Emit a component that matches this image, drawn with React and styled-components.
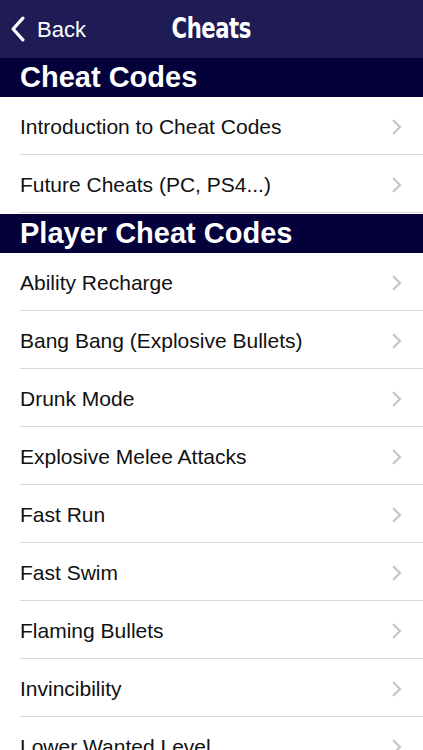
import React from 'react';
import styled, { createGlobalStyle } from 'styled-components';

const GlobalStyle = createGlobalStyle`
  html, body {
    margin: 0;
    padding: 0;
    background: #ffffff;
    font-family: "Liberation Sans", Arial, sans-serif;
    -webkit-font-smoothing: antialiased;
  }
`;

const sections = [
  {
    title: 'Cheat Codes',
    items: ['Introduction to Cheat Codes', 'Future Cheats (PC, PS4...)'],
  },
  {
    title: 'Player Cheat Codes',
    items: [
      'Ability Recharge',
      'Bang Bang (Explosive Bullets)',
      'Drunk Mode',
      'Explosive Melee Attacks',
      'Fast Run',
      'Fast Swim',
      'Flaming Bullets',
      'Invincibility',
      'Lower Wanted Level',
    ],
  },
];

const Chevron = ({ size = 12, color = '#c7c7cc', width = 2.4 }) => (
  <svg width={size * 0.62} height={size} viewBox="0 0 10 16" fill="none">
    <path d="M2 2 L8 8 L2 14" stroke={color} strokeWidth={width} strokeLinecap="square" strokeLinejoin="miter" />
  </svg>
);

const App = () => {
  return (
    <>
      <GlobalStyle />
      <Screen>
        <NavBar>
          <BackButton>
            <BackIcon viewBox="0 0 14 24" fill="none">
              <path d="M11.5 2 L2.5 12 L11.5 22" stroke="#ffffff" strokeWidth="3" strokeLinecap="round" strokeLinejoin="round" />
            </BackIcon>
            <span>Back</span>
          </BackButton>
          <Title>Cheats</Title>
        </NavBar>
        {sections.map((section, i) => (
          <Section key={section.title} $first={i === 0}>
            <SectionHeader>{section.title}</SectionHeader>
            {section.items.map((item) => (
              <Row key={item}>
                <RowLabel>{item}</RowLabel>
                <Chevron size={16} />
              </Row>
            ))}
          </Section>
        ))}
      </Screen>
    </>
  );
};

export default App;

const Screen = styled.div`
  width: 423px;
  height: 750px;
  overflow: hidden;
  background: #ffffff;
`;

const NavBar = styled.div`
  position: relative;
  height: 58px;
  background: #1e1b55;
  display: flex;
  align-items: center;
  justify-content: center;
`;

const BackButton = styled.div`
  position: absolute;
  left: 10px;
  top: 0;
  bottom: 0;
  display: flex;
  align-items: center;
  gap: 11px;
  color: #ffffff;
  font-size: 22px;
  span {
    margin-top: 2px;
  }
`;

const BackIcon = styled.svg`
  width: 16px;
  height: 26px;
`;

const Title = styled.div`
  color: #ffffff;
  font-family: "DejaVu Sans Condensed", "DejaVu Sans", sans-serif;
  font-weight: 700;
  font-size: 28px;
  letter-spacing: -0.5px;
  transform: scaleX(0.84);
  margin-top: -1px;
`;

const Section = styled.div`
  margin-top: ${(p) => (p.$first ? '0' : '1px')};
`;

const SectionHeader = styled.div`
  height: 39px;
  background: #03003a;
  color: #ffffff;
  font-weight: 700;
  font-size: 29px;
  padding-left: 20px;
  display: flex;
  align-items: center;
  box-sizing: border-box;
  padding-bottom: 1px;
`;

const Row = styled.div`
  height: 58px;
  margin-left: 20px;
  padding-right: 21px;
  padding-top: 2px;
  display: flex;
  align-items: center;
  justify-content: space-between;
  border-bottom: 1px solid #d9d9dc;
  box-sizing: border-box;
`;

const RowLabel = styled.div`
  color: #111111;
  font-size: 21px;
`;
